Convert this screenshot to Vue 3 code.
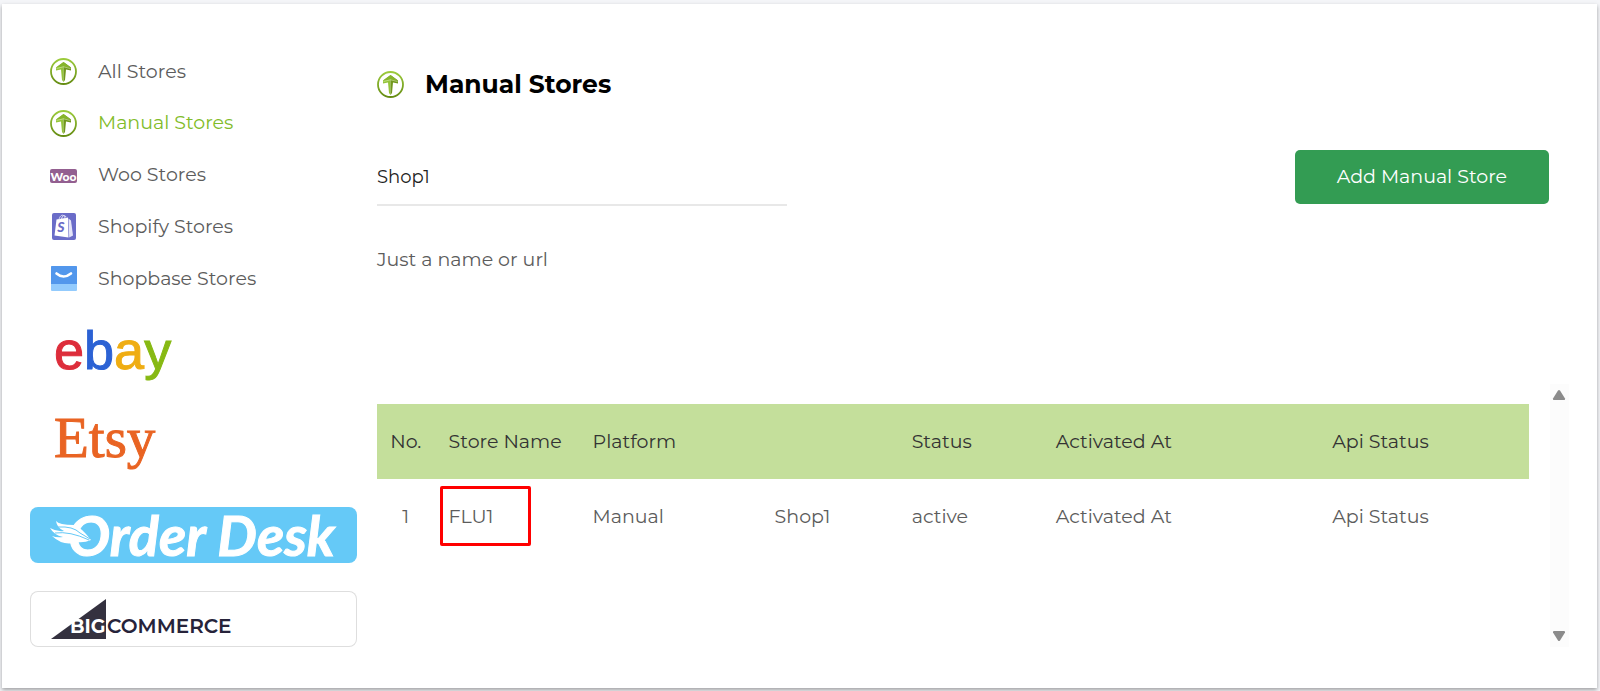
<template>
  <div class="card">
    <aside class="sidebar">
      <nav class="store-nav" aria-label="Stores">
        <a v-for="item in navItems" :key="item.label" href="#" class="nav-link" :class="{ active: item.active }">
          <svg v-if="item.icon === 'leaf'" class="icon" viewBox="0 0 27 27" aria-hidden="true">
            <use href="#leaf-icon" />
          </svg>
          <svg v-else-if="item.icon === 'woo'" class="icon" viewBox="0 0 27 27" aria-hidden="true">
            <rect y="7" width="27" height="14" rx="2" fill="#935f90" />
            <text x="13.5" y="18.5" class="woo-text">Woo</text>
          </svg>
          <svg v-else-if="item.icon === 'shopify'" class="icon" viewBox="0 0 27 27" aria-hidden="true">
            <rect x="2" width="24" height="27" rx="2" fill="#6a6cc8" />
            <path d="M6.500 6.500 18 4.500 18.500 24.500 4.500 22.500Z" fill="#fff" />
            <path d="M18.500 5.500 21 7.500 23 22.500 19.200 24.500Z" fill="#e4e4f8" />
            <path d="M9 7C9.500 3 12 1.500 13.500 2.500S15 5 15 6M11.500 6C12 3 14.500 1 16 4" fill="none" stroke="#e4e4f8" stroke-width="1" />
            <text x="11" y="19" class="shopify-text">S</text>
          </svg>
          <svg v-else class="icon" viewBox="0 0 27 27" aria-hidden="true">
            <rect x="1" y="1" width="26" height="25" rx="1" fill="#93cbfd" />
            <path d="M2 1H26Q27 1 27 2V19H1V2Q1 1 2 1Z" fill="#5297ec" />
            <path d="M6.500 8.500Q13.500 14.500 21 8.500" fill="none" stroke="#fff" stroke-width="2.600" stroke-linecap="round" />
          </svg>
          <span>{{ item.label }}</span>
        </a>
      </nav>

      <a href="#" class="brand ebay" aria-label="ebay"><span class="e">e</span><span class="b">b</span><span class="a">a</span><span class="y">y</span></a>
      <a href="#" class="brand etsy">Etsy</a>

      <a href="#" class="brand-box order-desk" aria-label="Order Desk">
        <svg class="brand-logo" viewBox="0 0 327 56" aria-hidden="true">
          <text x="38" y="49" class="order-text">Order Desk</text>
          <path d="M26 14Q29 18 44 18Q51 20 61 33Q54 36 47 35Q34 40 22 29Q27 31 33 30Q24 28 20 21Q27 25 34 24Q27 21 26 14Z" fill="#fff" />
          <path d="M28 20Q43 19 50 26L60 32M25 26Q40 24 59 33" fill="none" stroke="#65c9f7" stroke-width="1" />
        </svg>
      </a>

      <a href="#" class="brand-box bigcommerce" aria-label="BigCommerce">
        <svg class="brand-logo" viewBox="0 0 327 56" aria-hidden="true">
          <path d="M21 48 76 8V48Z" fill="#34313f" />
          <text x="40" y="42" class="big-text">BIG</text>
          <text x="77" y="42" class="commerce-text">COMMERCE</text>
        </svg>
      </a>
    </aside>

    <main class="content">
      <h1 class="title">
        <svg class="icon" viewBox="0 0 27 27" aria-hidden="true">
          <use href="#leaf-icon" />
        </svg>
        Manual Stores
      </h1>

      <form class="store-form" @submit.prevent>
        <div class="field">
          <input id="store-name" v-model="storeName" type="text" />
          <label for="store-name">Just a name or url</label>
        </div>
        <button type="submit" class="add-btn">Add Manual Store</button>
      </form>

      <div class="table-area">
        <table class="stores">
          <thead>
            <tr>
              <th v-for="(head, i) in headers" :key="i">{{ head }}</th>
            </tr>
          </thead>
          <tbody>
            <tr v-for="store in stores" :key="store.no">
              <td>{{ store.no }}</td>
              <td class="marked">{{ store.name }}</td>
              <td>{{ store.platform }}</td>
              <td>{{ store.shop }}</td>
              <td>{{ store.status }}</td>
              <td>{{ store.activatedAt }}</td>
              <td>{{ store.apiStatus }}</td>
            </tr>
          </tbody>
        </table>
        <div class="scroll-track">
          <button type="button" class="scroll-btn" aria-label="Scroll up">
            <svg viewBox="0 0 14 12"><path d="M6 1.500Q7 .5 8 1.500L13 9.500Q13.500 11 12 11H2Q.5 11 1 9.500Z" /></svg>
          </button>
          <button type="button" class="scroll-btn" aria-label="Scroll down">
            <svg viewBox="0 0 14 12"><path d="M6 10.500Q7 11.500 8 10.500L13 2.500Q13.500 1 12 1H2Q.5 1 1 2.500Z" /></svg>
          </button>
        </div>
      </div>
    </main>

    <svg class="defs" aria-hidden="true">
      <defs>
        <linearGradient id="leaf-ring" x1="0" y1="0" x2="0" y2="1">
          <stop offset="0" stop-color="#9ccb3c" />
          <stop offset="1" stop-color="#658c12" />
        </linearGradient>
        <symbol id="leaf-icon" viewBox="0 0 27 27">
          <circle cx="13.500" cy="13.500" r="12.500" fill="#fff" stroke="url(#leaf-ring)" stroke-width="1.800" />
          <path d="M13.500 4 6 9.500 6 12.500 11 11.500 12 22 13.500 24Z" fill="#94c43a" />
          <path d="M13.500 4 21 9.500 21 12.500 16 11.500 15 22 13.500 24Z" fill="#71971d" />
          <path d="M13.500 4 21 9.500 13.500 8.500 6 9.500Z" fill="#86b42c" />
          <path d="M6.500 10.500 13.500 8.800 20.500 10.500" fill="none" stroke="#d9ecb0" stroke-width=".6" />
        </symbol>
      </defs>
    </svg>
  </div>
</template>

<script setup>
import { ref } from 'vue';

const storeName = ref('Shop1');

const navItems = [
  { label: 'All Stores', icon: 'leaf' },
  { label: 'Manual Stores', icon: 'leaf', active: true },
  { label: 'Woo Stores', icon: 'woo' },
  { label: 'Shopify Stores', icon: 'shopify' },
  { label: 'Shopbase Stores', icon: 'shopbase' },
];

const headers = ['No.', 'Store Name', 'Platform', '', 'Status', 'Activated At', 'Api Status'];

const stores = ref([
  {
    no: 1,
    name: 'FLU1',
    platform: 'Manual',
    shop: 'Shop1',
    status: 'active',
    activatedAt: 'Activated At',
    apiStatus: 'Api Status',
  },
]);
</script>

<style>
body {
  background: #f4f5f8;
}
</style>

<style scoped>
.card {
  display: flex;
  gap: 20px;
  margin: 4px 3px 3px 2px;
  padding: 54px 28px 41px;
  background: #fff;
  box-shadow: 0 2px 4px rgba(0, 0, 0, 0.35);
  font-family: Montserrat, Inter, sans-serif;
  font-size: 19px;
  font-weight: 400;
  line-height: 24px;
  color: #5c5c5c;
}

a {
  color: inherit;
  text-decoration: none;
}

.icon {
  flex: none;
  width: 27px;
  height: 27px;
}

.defs {
  position: absolute;
  width: 0;
  height: 0;
}

.sidebar {
  flex: none;
  width: 327px;
}

.store-nav {
  display: flex;
  flex-direction: column;
  justify-content: space-between;
  height: 234px;
  padding-left: 20px;
}

.nav-link {
  display: flex;
  align-items: center;
  gap: 21px;
}

.nav-link.active {
  color: #82bc2a;
}

.woo-text {
  fill: #fff;
  font: 900 12px Lato, sans-serif;
  text-anchor: middle;
}

.shopify-text {
  fill: #6a6cc8;
  font: italic 900 14px Lato, sans-serif;
  text-anchor: middle;
}

.brand {
  display: block;
  padding-left: 24px;
}

.ebay {
  margin-top: 26px;
  font: 54px/64px "Liberation Sans", sans-serif;
  -webkit-text-stroke: 1px;
}

.ebay .e {
  color: #dd2d3b;
}

.ebay .b {
  color: #2c62d4;
}

.ebay .a {
  color: #efad13;
}

.ebay .y {
  color: #87b913;
}

.etsy {
  margin-top: 24px;
  font: 57px/64px "Liberation Serif", serif;
  color: #e96423;
  -webkit-text-stroke: 1px;
}

.brand-box {
  display: block;
  box-sizing: border-box;
  height: 56px;
  border-radius: 8px;
}

.brand-logo {
  display: block;
  width: 100%;
  height: 100%;
  overflow: visible;
}

.order-desk {
  margin-top: 37px;
  background: #65c9f7;
}

.order-text {
  fill: #fff;
  stroke: #fff;
  stroke-width: 1px;
  font: italic 700 56px Lato, sans-serif;
}

.bigcommerce {
  margin-top: 28px;
  box-shadow: inset 0 0 0 1px #dedede;
}

.big-text {
  fill: #fff;
  font: 700 19px Montserrat, Inter, sans-serif;
}

.commerce-text {
  fill: #26233a;
  font: 600 20px Montserrat, Inter, sans-serif;
}

.content {
  flex: 1;
  min-width: 0;
}

.title {
  display: flex;
  align-items: center;
  gap: 21px;
  margin: 10px 0 0;
  font-size: 25px;
  font-weight: 700;
  line-height: 32px;
  color: #000;
}

.store-form {
  display: flex;
  justify-content: space-between;
  align-items: flex-start;
  margin: 50px 20px 0 0;
}

.field {
  width: 35%;
}

.field input {
  box-sizing: border-box;
  width: 100%;
  height: 56px;
  padding: 0;
  border: 0;
  border-bottom: 2px solid #e8e8e8;
  background: none;
  font: inherit;
  font-size: 18px;
  color: #222;
  outline: none;
}

.field label {
  display: block;
  margin-top: 42px;
}

.add-btn {
  height: 54px;
  padding: 0 42px;
  border: 0;
  border-radius: 5px;
  background: #339c53;
  color: #fff;
  font: inherit;
}

.table-area {
  display: flex;
  gap: 21px;
  min-height: 263px;
  margin-top: 112px;
}

.stores {
  flex: 1;
  align-self: flex-start;
  table-layout: fixed;
  width: 100%;
  margin-top: 20px;
  border-collapse: collapse;
}

.stores th,
.stores td {
  box-sizing: border-box;
  height: 75px;
  padding: 0 0 0 14px;
  font-weight: 400;
  text-align: left;
  white-space: nowrap;
}

.stores th {
  background: #c4df9b;
  color: #333;
}

.stores th:first-child,
.stores td:first-child {
  width: 5%;
  padding: 0;
  text-align: center;
}

.stores th:nth-child(2),
.stores th:nth-child(5) {
  width: 12.5%;
}

.stores th:nth-child(3) {
  width: 15.8%;
}

.stores th:nth-child(4) {
  width: 11.9%;
}

.stores th:nth-child(6) {
  width: 24%;
}

.marked {
  position: relative;
}

.marked::after {
  content: "";
  position: absolute;
  top: 7px;
  left: 5px;
  box-sizing: border-box;
  width: 91px;
  height: 60px;
  border: 3px solid #f00;
  border-radius: 2px;
}

.scroll-track {
  display: flex;
  flex: none;
  flex-direction: column;
  justify-content: space-between;
  width: 19px;
  background: #fcfcfc;
}

.scroll-btn {
  padding: 5px 2px;
  border: 0;
  background: none;
}

.scroll-btn svg {
  display: block;
  width: 14px;
  height: 12px;
  fill: #8b8b8b;
}
</style>
